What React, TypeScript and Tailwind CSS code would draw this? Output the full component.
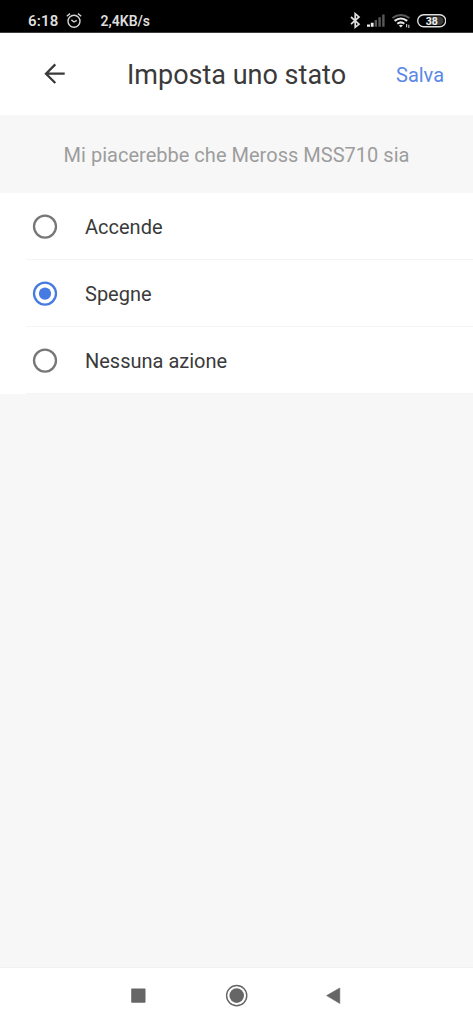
import React from "react";

type Option = { id: string; label: string };

const options: Option[] = [
  { id: "on", label: "Accende" },
  { id: "off", label: "Spegne" },
  { id: "none", label: "Nessuna azione" },
];

function StatusBar() {
  return (
    <div className="flex h-[33px] shrink-0 border-b border-[#3c3c3c] bg-black pl-7 pt-2 text-[#dedede]">
      <span className="w-[38px] whitespace-nowrap text-[15px] font-semibold leading-[26px] tracking-[0.2px]">6:18</span>
      <svg className="mt-1 h-[18px] w-[16px]" viewBox="0 0 16 18" fill="none" stroke="#d4d4d4" strokeWidth="1.4">
        <circle cx="8" cy="9.2" r="6" />
        <path d="M0.8 4.2 4 1.6M15.2 4.2 12 1.6M5.4 7.9 8 10l2.8-1.7" />
      </svg>
      <span className="ml-[18.5px] whitespace-nowrap text-[14px] font-semibold leading-[26px]">2,4KB/s</span>
      <div className="ml-auto mr-[27px] flex items-start">
        <svg className="mt-1 h-[18px] w-[96px]" viewBox="350 12 96 18" fill="none">
          <path d="M351 17 359 24.2 355.2 27.3V13.7L359 17 351 24.2" stroke="#dedede" strokeWidth="1.7" />
          <path d="M367 24.4h3v2.4h-3zM370.8 22.7h2.8v4.1h-2.8z" fill="#eeeeee" />
          <path d="M374.6 20h2.4v6.8h-2.4zM378.4 17.2h2.4v9.6h-2.4zM382.2 14.6h2.4v12.2h-2.4z" fill="#585858" />
          <path d="M392.4 18q8.4-6.2 17 0" stroke="#5a5a5a" strokeWidth="2" />
          <path d="M394.6 20.9q6.2-4.8 12.6 0M397.3 23.8q3.5-2.8 7 0" stroke="#e8e8e8" strokeWidth="2.1" />
          <path d="m398.9 25.4 2 2 2-2q-2-1.3-4 0Z" fill="#e8e8e8" />
          <path d="M406.6 24v3.2M408.8 24.8v3.2" stroke="#bcbcbc" strokeWidth="1.2" />
          <rect x="417.7" y="14.7" width="28" height="12" rx="6" stroke="#dedede" strokeWidth="1.4" />
          <path d="M429 16.5h10.4a4.2 4.2 0 0 1 0 8.4H429Z" fill="#3a3a3a" />
          <text x="431.8" y="24.5" textAnchor="middle" fill="#eee" fontSize="10.5" fontWeight="700">38</text>
        </svg>
      </div>
    </div>
  );
}

function Radio({ checked }: { checked: boolean }) {
  return (
    <svg className="size-[26px] shrink-0" viewBox="0 0 26 26" fill="none">
      <circle cx="13" cy="12.6" r="11" stroke={checked ? "#477be2" : "#777777"} strokeWidth="2.3" />
      {checked && <circle cx="13" cy="12.6" r="6.1" fill="#477be2" />}
    </svg>
  );
}

export default function App() {
  const [selected, setSelected] = React.useState("off");
  return (
    <div className="flex h-[1024px] w-[473px] flex-col overflow-hidden bg-[#f7f7f7] font-['Roboto',sans-serif] text-[#3a3a3a]">
      <StatusBar />
      <header className="flex h-[82px] shrink-0 items-center bg-white pl-[44px]">
        <button aria-label="Indietro" className="size-[22px]">
          <svg className="size-[22px]" viewBox="0 0 22 22" fill="none" stroke="#3a3a3a" strokeWidth="2.3">
            <path d="M20.7 10.7H2M11.3 1.4 2 10.7l9.3 9.3" />
          </svg>
        </button>
        <h1 className="ml-[61px] w-[269px] whitespace-nowrap pt-[2px] text-[27px] leading-[32px]">Imposta uno stato</h1>
        <button className="whitespace-nowrap pt-[2px] text-[20px] leading-6 text-[#5a88e6]">Salva</button>
      </header>
      <p className="flex h-[78px] shrink-0 items-center justify-center whitespace-nowrap pt-[2px] text-[20px] tracking-[0.02px] text-[#9d9d9d]">
        Mi piacerebbe che Meross MSS710 sia
      </p>
      <div className="shrink-0 bg-white">
        {options.map((option) => (
          <div key={option.id} className="h-[67px] pl-[26px]">
            <button
              onClick={() => setSelected(option.id)}
              className="flex h-[67px] w-full items-center border-b border-[#f4f4f4] pl-[6px] pt-[2px] text-left"
            >
              <Radio checked={selected === option.id} />
              <span className="ml-[27px] text-[20px] leading-6">{option.label}</span>
            </button>
          </div>
        ))}
      </div>
      <nav className="mt-auto flex h-[57px] shrink-0 items-center justify-center border-t border-[#f1f1f1] bg-white">
        <svg className="h-[24px] w-[212px]" viewBox="131 984 212 24">
          <rect x="131.2" y="988.4" width="14.3" height="14.3" rx="0.6" fill="#666" />
          <circle cx="236.7" cy="995.6" r="10.1" fill="none" stroke="#666" strokeWidth="1.4" />
          <circle cx="236.7" cy="995.6" r="7.3" fill="#666" />
          <path d="M326.6 995.6 339.8 988v15.5Z" fill="#666" stroke="#666" strokeWidth="0.6" strokeLinejoin="round" />
        </svg>
      </nav>
    </div>
  );
}
